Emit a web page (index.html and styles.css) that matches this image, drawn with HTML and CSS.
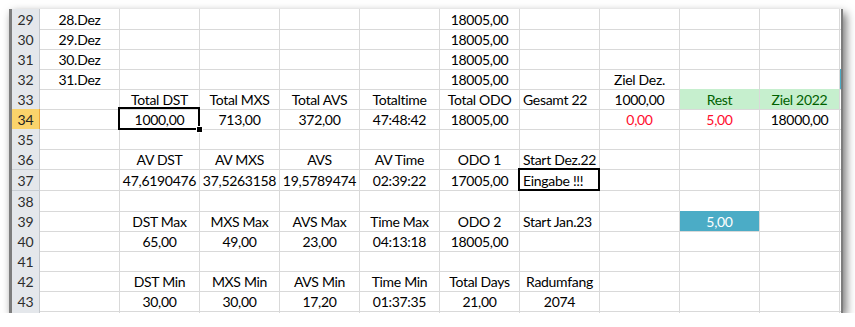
FILE: index.html
```html
<!DOCTYPE html>
<html>
<head>
<meta charset="utf-8">
<link rel="stylesheet" href="styles.css">
</head>
<body>
<div class="window">
  <div class="row"><div class="rh">29</div><div class="c">28.Dez</div><div class="c"></div><div class="c"></div><div class="c"></div><div class="c"></div><div class="c">18005,00</div><div class="c"></div><div class="c"></div><div class="c"></div><div class="c"></div><div class="c"></div></div>
  <div class="row"><div class="rh">30</div><div class="c">29.Dez</div><div class="c"></div><div class="c"></div><div class="c"></div><div class="c"></div><div class="c">18005,00</div><div class="c"></div><div class="c"></div><div class="c"></div><div class="c"></div><div class="c"></div></div>
  <div class="row"><div class="rh">31</div><div class="c">30.Dez</div><div class="c"></div><div class="c"></div><div class="c"></div><div class="c"></div><div class="c">18005,00</div><div class="c"></div><div class="c"></div><div class="c"></div><div class="c"></div><div class="c"></div></div>
  <div class="row"><div class="rh">32</div><div class="c">31.Dez</div><div class="c"></div><div class="c"></div><div class="c"></div><div class="c"></div><div class="c">18005,00</div><div class="c"></div><div class="c">Ziel Dez.</div><div class="c"></div><div class="c"></div><div class="c teal"></div></div>
  <div class="row"><div class="rh">33</div><div class="c"></div><div class="c">Total DST</div><div class="c">Total MXS</div><div class="c">Total AVS</div><div class="c">Totaltime</div><div class="c">Total ODO</div><div class="c left">Gesamt 22</div><div class="c">1000,00</div><div class="c good">Rest</div><div class="c good">Ziel 2022</div><div class="c"></div></div>
  <div class="row"><div class="rh sel-h">34</div><div class="c"></div><div class="c boxed selected">1000,00</div><div class="c">713,00</div><div class="c">372,00</div><div class="c">47:48:42</div><div class="c">18005,00</div><div class="c"></div><div class="c red">0,00</div><div class="c red">5,00</div><div class="c">18000,00</div><div class="c"></div></div>
  <div class="row"><div class="rh">35</div><div class="c"></div><div class="c"></div><div class="c"></div><div class="c"></div><div class="c"></div><div class="c"></div><div class="c"></div><div class="c"></div><div class="c"></div><div class="c"></div><div class="c"></div></div>
  <div class="row tall"><div class="rh">36</div><div class="c"></div><div class="c">AV DST</div><div class="c">AV MXS</div><div class="c">AVS</div><div class="c">AV Time</div><div class="c">ODO 1</div><div class="c left">Start Dez.22</div><div class="c"></div><div class="c"></div><div class="c"></div><div class="c"></div></div>
  <div class="row tall"><div class="rh">37</div><div class="c"></div><div class="c">47,6190476</div><div class="c">37,5263158</div><div class="c">19,5789474</div><div class="c">02:39:22</div><div class="c">17005,00</div><div class="c left boxed">Eingabe !!!</div><div class="c"></div><div class="c"></div><div class="c"></div><div class="c"></div></div>
  <div class="row"><div class="rh">38</div><div class="c"></div><div class="c"></div><div class="c"></div><div class="c"></div><div class="c"></div><div class="c"></div><div class="c"></div><div class="c"></div><div class="c"></div><div class="c"></div><div class="c"></div></div>
  <div class="row"><div class="rh">39</div><div class="c"></div><div class="c">DST Max</div><div class="c">MXS Max</div><div class="c">AVS Max</div><div class="c">Time Max</div><div class="c">ODO 2</div><div class="c left">Start Jan.23</div><div class="c"></div><div class="c teal">5,00</div><div class="c"></div><div class="c"></div></div>
  <div class="row"><div class="rh">40</div><div class="c"></div><div class="c">65,00</div><div class="c">49,00</div><div class="c">23,00</div><div class="c">04:13:18</div><div class="c">18005,00</div><div class="c"></div><div class="c"></div><div class="c"></div><div class="c"></div><div class="c"></div></div>
  <div class="row"><div class="rh">41</div><div class="c"></div><div class="c"></div><div class="c"></div><div class="c"></div><div class="c"></div><div class="c"></div><div class="c"></div><div class="c"></div><div class="c"></div><div class="c"></div><div class="c"></div></div>
  <div class="row"><div class="rh">42</div><div class="c"></div><div class="c">DST Min</div><div class="c">MXS Min</div><div class="c">AVS Min</div><div class="c">Time Min</div><div class="c">Total Days</div><div class="c">Radumfang</div><div class="c"></div><div class="c"></div><div class="c"></div><div class="c"></div></div>
  <div class="row"><div class="rh">43</div><div class="c"></div><div class="c">30,00</div><div class="c">30,00</div><div class="c">17,20</div><div class="c">01:37:35</div><div class="c">21,00</div><div class="c">2074</div><div class="c"></div><div class="c"></div><div class="c"></div><div class="c"></div></div>
  <div class="row"><div class="rh"></div><div class="c"></div><div class="c"></div><div class="c"></div><div class="c"></div><div class="c"></div><div class="c"></div><div class="c"></div><div class="c"></div><div class="c"></div><div class="c"></div><div class="c"></div></div>
</div>
</body>
</html>
```

FILE: styles.css
```css
html, body {
  margin: 0;
  padding: 0;
  background: #ffffff;
}

body {
  font-family: Lato, "Open Sans", sans-serif;
  font-size: 14px;
  letter-spacing: -0.3px;
  color: #000;
}

.window {
  margin: 9px 0 0 9px;
  width: 834px;
  height: 304px;
  box-sizing: border-box;
  overflow: hidden;
  background: #fff;
  border-left: 3px solid #7d7d7d;
  border-right: 2px solid #7d7d7d;
  box-shadow: 3px 4px 9px rgba(0, 0, 0, 0.55);
}

.row {
  display: grid;
  grid-template-columns: 28px repeat(10, 80px) 80px;
  height: 20px;
}

.row.tall {
  height: 21px;
}

.rh, .c {
  box-sizing: border-box;
  border-right: 1px solid #d9d9d9;
  border-bottom: 1px solid #d9d9d9;
  display: flex;
  align-items: center;
  justify-content: center;
  white-space: nowrap;
  line-height: 19px;
  padding-top: 1px;
}

.rh {
  background: #e4e7eb;
  color: #2d2d2d;
  border-bottom-color: #c9cdd2;
  border-right-color: #c3c7cc;
  letter-spacing: 0;
}

.rh.sel-h {
  background: #fad36b;
  border-right-color: #e9a53c;
  border-bottom-color: #e3b552;
  color: #222;
}

.c.left {
  justify-content: flex-start;
  padding-left: 3px;
}

.c.good {
  background: #c6efce;
  color: #006100;
}

.c.red {
  color: #ff0d2d;
}

.c.teal {
  background: #4bacc6;
  color: #ffffff;
}

.boxed {
  position: relative;
}

.boxed::after {
  content: "";
  position: absolute;
  left: -2px;
  top: -2px;
  right: -1px;
  bottom: -1px;
  border: 2px solid #000;
  pointer-events: none;
}

.selected::before {
  content: "";
  position: absolute;
  right: -4px;
  bottom: -4px;
  width: 5px;
  height: 5px;
  background: #000;
  border: 1px solid #fff;
  z-index: 2;
}
```
